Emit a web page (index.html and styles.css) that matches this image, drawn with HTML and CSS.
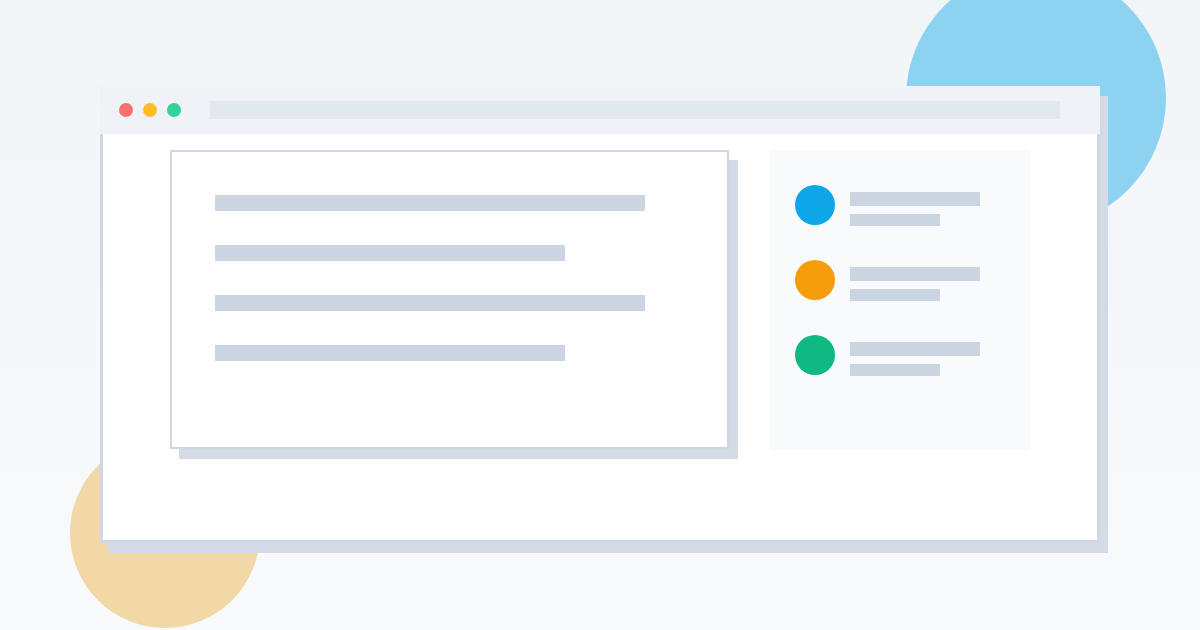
FILE: index.html
```html
<!DOCTYPE html>
<html lang="en">

<head>
    <meta charset="UTF-8">
    <meta name="viewport" content="width=device-width, initial-scale=1.0">
    <title>Browser mockup</title>
    <link rel="stylesheet" href="styles.css">
</head>

<body>
    <div class="stage">
        <!-- 背景装饰圆 -->
        <div class="blob blob-blue"></div>
        <div class="blob blob-orange"></div>

        <div class="window">
            <div class="window-bar">
                <span class="dot dot-red"></span>
                <span class="dot dot-yellow"></span>
                <span class="dot dot-green"></span>
                <div class="address"></div>
            </div>
            <div class="window-body">
                <div class="card">
                    <div class="line line-long"></div>
                    <div class="line line-short"></div>
                    <div class="line line-long"></div>
                    <div class="line line-short"></div>
                </div>
                <div class="side">
                    <div class="side-item">
                        <span class="avatar avatar-blue"></span>
                        <div class="side-text">
                            <div class="side-title"></div>
                            <div class="side-sub"></div>
                        </div>
                    </div>
                    <div class="side-item">
                        <span class="avatar avatar-orange"></span>
                        <div class="side-text">
                            <div class="side-title"></div>
                            <div class="side-sub"></div>
                        </div>
                    </div>
                    <div class="side-item">
                        <span class="avatar avatar-green"></span>
                        <div class="side-text">
                            <div class="side-title"></div>
                            <div class="side-sub"></div>
                        </div>
                    </div>
                </div>
            </div>
        </div>
    </div>
</body>

</html>
```

FILE: styles.css
```css
html,
body {
    margin: 0;
    padding: 0;
}

body {
    font-family: "Liberation Sans", Arial, sans-serif;
}

.stage {
    position: relative;
    overflow: hidden;
    width: 1200px;
    height: 630px;
    box-sizing: border-box;
    padding: 86px 100px 0;
    background: linear-gradient(#f2f5f8, #f8fafc);
}

/* 装饰圆 */
.blob {
    position: absolute;
    border-radius: 50%;
}

.blob-blue {
    left: 906px;
    top: -32px;
    width: 260px;
    height: 260px;
    background: #8dd3f1;
}

.blob-orange {
    left: 70px;
    top: 438px;
    width: 190px;
    height: 190px;
    background: #f2d8a6;
}

/* 浏览器窗口 */
.window {
    position: relative;
    width: 1000px;
    box-shadow: 8px 10px 0 #d3dbe7;
}

.window-bar {
    height: 48px;
    background: #eff3f7;
    display: flex;
    align-items: center;
    padding-left: 19px;
}

.dot {
    width: 14px;
    height: 14px;
    border-radius: 50%;
    margin-right: 10px;
}

.dot-red {
    background: #f87171;
}

.dot-yellow {
    background: #fbbf24;
}

.dot-green {
    background: #34d399;
}

.address {
    width: 850px;
    height: 18px;
    margin-left: 19px;
    background: #e2e8f0;
}

.window-body {
    box-sizing: border-box;
    height: 409px;
    background: #fff;
    border: 3px solid #cfd7e3;
    border-top: none;
    display: flex;
    align-items: flex-start;
    gap: 41px;
    padding: 16px 0 0 67px;
}

/* 左侧卡片 */
.card {
    width: 512px;
    height: 252px;
    border: 2px solid #cdd6e2;
    background: #fff;
    box-shadow: 9px 10px 0 #d3dbe7;
    padding: 43px 0 0 43px;
}

.line {
    height: 16px;
    background: #cbd5e1;
    margin-bottom: 34px;
}

.line-long {
    width: 430px;
}

.line-short {
    width: 350px;
}

/* 右侧列表 */
.side {
    width: 260px;
    height: 300px;
    box-sizing: border-box;
    background: #f8fafc;
    border-radius: 3px;
    padding: 35px 25px 0;
}

.side-item {
    display: flex;
    align-items: flex-start;
    margin-bottom: 34px;
}

.avatar {
    flex: none;
    width: 40px;
    height: 40px;
    border-radius: 50%;
    margin-right: 15px;
}

.avatar-blue {
    background: #0ea5e9;
}

.avatar-orange {
    background: #f59e0b;
}

.avatar-green {
    background: #10b981;
}

.side-text {
    padding-top: 7px;
}

.side-title {
    width: 130px;
    height: 14px;
    background: #cbd5e1;
    margin-bottom: 8px;
}

.side-sub {
    width: 90px;
    height: 12px;
    background: #cbd5e1;
}
```
